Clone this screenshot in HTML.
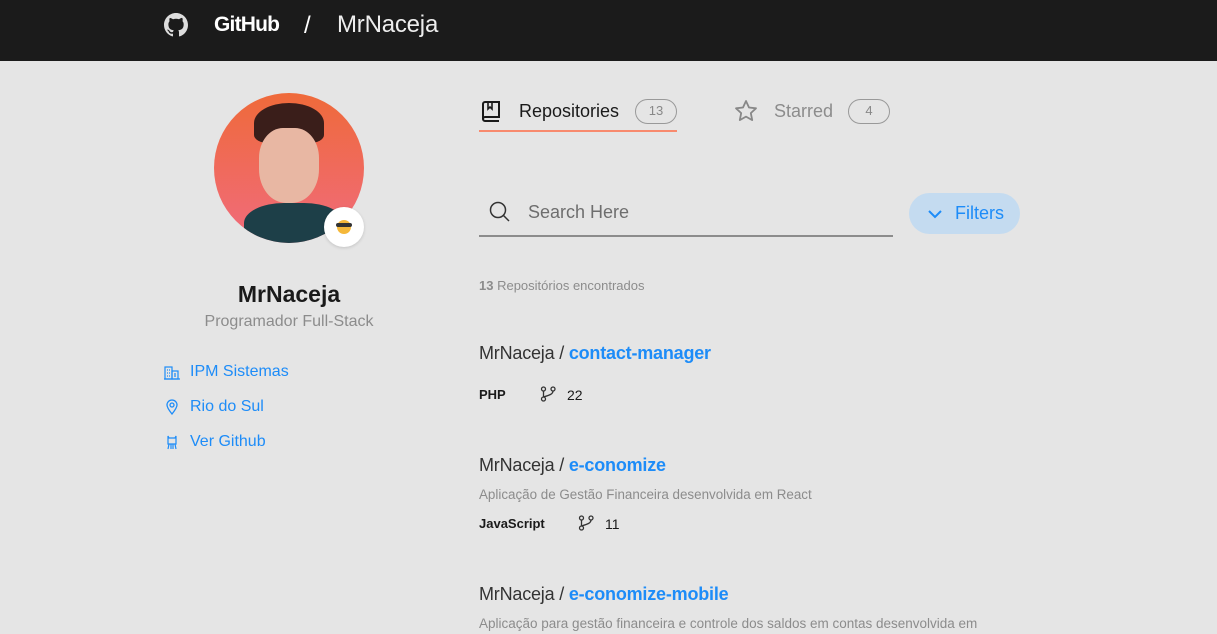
<!DOCTYPE html>
<html><head><meta charset="utf-8"><style>
*{margin:0;padding:0;box-sizing:border-box}
body{width:1217px;height:634px;overflow:hidden;background:#e5e5e5;font-family:"Liberation Sans",sans-serif;position:relative}
.hdr{position:absolute;left:0;top:0;width:1217px;height:61px;background:#1b1b1b;color:#fff}
.a{position:absolute;white-space:nowrap}
.blue{color:#1d8cf8}
.pill{position:absolute;border:1.5px solid #999;border-radius:13px;height:25px;color:#888;font-size:13px;text-align:center;line-height:22px}
</style></head><body>
<div class="hdr">
<svg class="a" style="left:164px;top:13px" width="24" height="24" viewBox="0 0 16 16"><path fill="#ddd" d="M8 0C3.58 0 0 3.58 0 8c0 3.540 2.290 6.530 5.470 7.590.4.07.55-.17.55-.38 0-.19-.01-.82-.01-1.49-2.010.37-2.530-.49-2.690-.94-.09-.23-.48-.94-.82-1.130-.28-.15-.68-.52-.01-.53.63-.01 1.080.58 1.230.82.72 1.210 1.870.87 2.330.66.07-.52.28-.87.51-1.070-1.780-.2-3.640-.89-3.640-3.950 0-.87.31-1.590.82-2.150-.08-.2-.36-1.020.08-2.120 0 0 .67-.21 2.200.82.64-.18 1.320-.27 2-.27.68 0 1.360.09 2 .27 1.530-1.040 2.200-.82 2.200-.82.44 1.100.16 1.920.08 2.120.51.56.82 1.270.82 2.150 0 3.070-1.870 3.750-3.650 3.950.29.25.54.73.54 1.480 0 1.070-.01 1.930-.01 2.200 0 .21.15.46.55.38A8.013 8.013 0 0016 8c0-4.420-3.580-8-8-8z"/></svg>
<div class="a" style="left:214px;top:13px;font-size:21px;font-weight:bold;letter-spacing:-0.8px">GitHub</div>
<div class="a" style="left:304px;top:12px;font-size:24px">/</div>
<div class="a" style="left:337px;top:11px;font-size:24px;color:#eee;letter-spacing:-0.2px">MrNaceja</div>
</div>

<div class="a" style="left:214px;top:93px;width:150px;height:150px;border-radius:50%;background:linear-gradient(#ef6a3a,#f06b7d);overflow:hidden">
<div class="a" style="left:40px;top:10px;width:70px;height:40px;border-radius:50% 50% 20% 20%;background:#3a1e1a"></div>
<div class="a" style="left:45px;top:35px;width:60px;height:75px;border-radius:40% 40% 45% 45%;background:#e8b7a3"></div>
<div class="a" style="left:30px;top:110px;width:100px;height:50px;border-radius:40% 40% 0 0;background:#1d3f48"></div>
</div>
<div class="a" style="left:324px;top:207px;width:40px;height:40px;border-radius:50%;background:#fff;box-shadow:0 1px 3px rgba(0,0,0,.15)"><div class="a" style="left:13px;top:13px;width:14px;height:14px;border-radius:50%;background:#f5b83a"></div><div class="a" style="left:12px;top:16px;width:16px;height:4px;background:#333;border-radius:2px"></div></div>

<div class="a" style="left:0;width:578px;text-align:center;top:281px;font-size:23px;font-weight:bold;color:#1a1a1a">MrNaceja</div>
<div class="a" style="left:0;width:578px;text-align:center;top:313px;font-size:16px;color:#8c8c8c">Programador Full-Stack</div>

<svg class="a" style="left:164px;top:365px" width="16" height="15" viewBox="0 0 16 15" fill="none" stroke="#1d8cf8" stroke-width="1.2"><rect x="1" y="2" width="7" height="12"/><rect x="8" y="6" width="6" height="8"/><path d="M3 5h1M5 5h1M3 8h1M5 8h1M3 11h1M5 11h1M10 9h2M10 11h2M0 14h16"/></svg>
<div class="a blue" style="left:190px;top:363px;font-size:16px">IPM Sistemas</div>
<svg class="a" style="left:165px;top:399px" width="14" height="16" viewBox="0 0 14 16" fill="none" stroke="#1d8cf8" stroke-width="1.3"><path d="M7 15C3 10 2 8 2 6a5 5 0 0110 0c0 2-1 4-5 9z"/><circle cx="7" cy="6" r="2"/></svg>
<div class="a blue" style="left:190px;top:398px;font-size:16px">Rio do Sul</div>
<svg class="a" style="left:165px;top:434px" width="14" height="17" viewBox="0 0 14 17" fill="none" stroke="#1d8cf8" stroke-width="1.2"><path d="M3 2l1 2h6l1-2v8H3z M4 10l-1 5M6 10v5M8 10v5M10 10l1 5"/></svg>
<div class="a blue" style="left:190px;top:433px;font-size:16px">Ver Github</div>

<svg class="a" style="left:481px;top:101px" width="20" height="22" viewBox="0 0 20 22" fill="none" stroke="#1a1a1a" stroke-width="2"><path d="M2 18V3a2 2 0 012-2h14v15H4a2 2 0 000 4h14"/><path d="M7 1v7l2-2 2 2V1" stroke-width="1.6"/></svg>
<div class="a" style="left:519px;top:101px;font-size:18px;color:#1a1a1a">Repositories</div>
<div class="pill" style="left:635px;top:99px;width:42px">13</div>
<div class="a" style="left:479px;top:130px;width:198px;height:2px;background:#f88a6e"></div>
<svg class="a" style="left:734px;top:99px" width="24" height="24" viewBox="0 0 24 24" fill="none" stroke="#888" stroke-width="1.8" stroke-linejoin="round"><path d="M12 2l3 6.5 7 .8-5.2 4.8 1.4 7L12 17.6 5.8 21.1l1.4-7L2 9.3l7-.8z"/></svg>
<div class="a" style="left:774px;top:101px;font-size:18px;color:#8c8c8c">Starred</div>
<div class="pill" style="left:848px;top:99px;width:42px">4</div>

<svg class="a" style="left:488px;top:200px" width="24" height="24" viewBox="0 0 24 24" fill="none" stroke="#333" stroke-width="1.5"><circle cx="10" cy="10" r="7.5"/><path d="M15.5 15.5L21 21"/></svg>
<div class="a" style="left:528px;top:202px;font-size:18px;color:#6e6e6e">Search Here</div>
<div class="a" style="left:479px;top:235px;width:414px;height:1.5px;background:#8c8c8c"></div>
<div class="a" style="left:909px;top:193px;width:111px;height:41px;border-radius:21px;background:#c4dbf0"></div>
<svg class="a" style="left:927px;top:208px" width="16" height="12" viewBox="0 0 16 12" fill="none" stroke="#1d8cf8" stroke-width="2"><path d="M2 3l6 6 6-6"/></svg>
<div class="a blue" style="left:955px;top:203px;font-size:18px">Filters</div>

<div class="a" style="left:479px;top:278px;font-size:13px;color:#8c8c8c"><b>13</b> Repositórios encontrados</div>

<div class="a" style="left:479px;top:343px;font-size:18px;color:#333;letter-spacing:-0.2px">MrNaceja / <b class="blue">contact-manager</b></div>
<div class="a" style="left:479px;top:387px;font-size:13px;font-weight:bold;color:#1a1a1a">PHP</div>
<svg class="a" style="left:540px;top:386px" width="17" height="16" viewBox="0 0 17 16" fill="none" stroke="#333" stroke-width="1.3"><circle cx="3.5" cy="3" r="2"/><circle cx="3.5" cy="13" r="2"/><circle cx="13" cy="3" r="2"/><path d="M3.5 5v6M13 5c0 3-3 4-9.5 6"/></svg>
<div class="a" style="left:567px;top:387px;font-size:14px;color:#1a1a1a">22</div>

<div class="a" style="left:479px;top:455px;font-size:18px;color:#333;letter-spacing:-0.2px">MrNaceja / <b class="blue">e-conomize</b></div>
<div class="a" style="left:479px;top:487px;font-size:13.4px;color:#8c8c8c">Aplicação de Gestão Financeira desenvolvida em React</div>
<div class="a" style="left:479px;top:516px;font-size:13px;font-weight:bold;color:#1a1a1a">JavaScript</div>
<svg class="a" style="left:578px;top:515px" width="17" height="16" viewBox="0 0 17 16" fill="none" stroke="#333" stroke-width="1.3"><circle cx="3.5" cy="3" r="2"/><circle cx="3.5" cy="13" r="2"/><circle cx="13" cy="3" r="2"/><path d="M3.5 5v6M13 5c0 3-3 4-9.5 6"/></svg>
<div class="a" style="left:605px;top:516px;font-size:14px;color:#1a1a1a">11</div>

<div class="a" style="left:479px;top:584px;font-size:18px;color:#333;letter-spacing:-0.2px">MrNaceja / <b class="blue">e-conomize-mobile</b></div>
<div class="a" style="left:479px;top:616px;font-size:13.5px;color:#8c8c8c">Aplicação para gestão financeira e controle dos saldos em contas desenvolvida em</div>
</body></html>
